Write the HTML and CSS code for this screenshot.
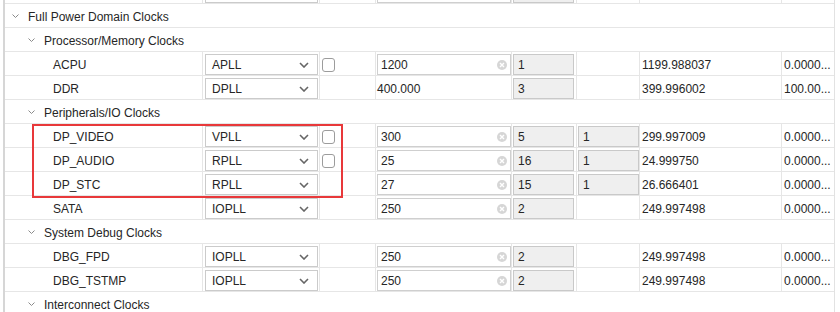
FILE: index.html
```html
<html lang="en">
<head>
    <meta charset="UTF-8">
    <title>Clock Configuration</title>
    <link rel="stylesheet" href="styles.css">
</head>
<body>
    <div class="tree">
        <!-- only the bottom edge of the row above is in view -->
        <div class="row item partial">
            <div class="cell name"></div>
            <div class="cell"><div class="pick"></div></div>
            <div class="cell"></div>
            <div class="cell"><div class="field"></div></div>
            <div class="cell"><div class="fixed"></div></div>
            <div class="cell"></div>
            <div class="cell"></div>
            <div class="cell last"></div>
        </div>

        <div class="row group lvl0">
            <svg class="fold" width="7" height="5" viewBox="0 0 7 5"><polyline points="0.5,0.5 3.5,3.5 6.5,0.5"/></svg>
            <span>Full Power Domain Clocks</span>
        </div>
        <div class="row group lvl1">
            <svg class="fold" width="7" height="5" viewBox="0 0 7 5"><polyline points="0.5,0.5 3.5,3.5 6.5,0.5"/></svg>
            <span>Processor/Memory Clocks</span>
        </div>

        <div class="row item">
            <div class="cell name">ACPU</div>
            <div class="cell"><div class="pick"><span>APLL</span><svg class="arrow" width="10" height="6" viewBox="0 0 10 6"><polyline points="1,1 5,5 9,1"/></svg></div></div>
            <div class="cell"><div class="check"></div></div>
            <div class="cell"><div class="field"><span>1200</span><svg class="clear" width="10" height="10" viewBox="0 0 10 10"><circle cx="5" cy="5" r="5"/><path d="M3 3 L7 7 M7 3 L3 7"/></svg></div></div>
            <div class="cell"><div class="fixed">1</div></div>
            <div class="cell"></div>
            <div class="cell">1199.988037</div>
            <div class="cell last">0.0000...</div>
        </div>
        <div class="row item">
            <div class="cell name">DDR</div>
            <div class="cell"><div class="pick"><span>DPLL</span><svg class="arrow" width="10" height="6" viewBox="0 0 10 6"><polyline points="1,1 5,5 9,1"/></svg></div></div>
            <div class="cell"></div>
            <div class="cell plain">400.000</div>
            <div class="cell"><div class="fixed">3</div></div>
            <div class="cell"></div>
            <div class="cell">399.996002</div>
            <div class="cell last">100.00...</div>
        </div>

        <div class="row group lvl1">
            <svg class="fold" width="7" height="5" viewBox="0 0 7 5"><polyline points="0.5,0.5 3.5,3.5 6.5,0.5"/></svg>
            <span>Peripherals/IO Clocks</span>
        </div>

        <div class="row item">
            <div class="cell name">DP_VIDEO</div>
            <div class="cell"><div class="pick"><span>VPLL</span><svg class="arrow" width="10" height="6" viewBox="0 0 10 6"><polyline points="1,1 5,5 9,1"/></svg></div></div>
            <div class="cell"><div class="check"></div></div>
            <div class="cell"><div class="field"><span>300</span><svg class="clear" width="10" height="10" viewBox="0 0 10 10"><circle cx="5" cy="5" r="5"/><path d="M3 3 L7 7 M7 3 L3 7"/></svg></div></div>
            <div class="cell"><div class="fixed">5</div></div>
            <div class="cell"><div class="fixed">1</div></div>
            <div class="cell">299.997009</div>
            <div class="cell last">0.0000...</div>
        </div>
        <div class="row item">
            <div class="cell name">DP_AUDIO</div>
            <div class="cell"><div class="pick"><span>RPLL</span><svg class="arrow" width="10" height="6" viewBox="0 0 10 6"><polyline points="1,1 5,5 9,1"/></svg></div></div>
            <div class="cell"><div class="check"></div></div>
            <div class="cell"><div class="field"><span>25</span><svg class="clear" width="10" height="10" viewBox="0 0 10 10"><circle cx="5" cy="5" r="5"/><path d="M3 3 L7 7 M7 3 L3 7"/></svg></div></div>
            <div class="cell"><div class="fixed">16</div></div>
            <div class="cell"><div class="fixed">1</div></div>
            <div class="cell">24.999750</div>
            <div class="cell last">0.0000...</div>
        </div>
        <div class="row item">
            <div class="cell name">DP_STC</div>
            <div class="cell"><div class="pick"><span>RPLL</span><svg class="arrow" width="10" height="6" viewBox="0 0 10 6"><polyline points="1,1 5,5 9,1"/></svg></div></div>
            <div class="cell"></div>
            <div class="cell"><div class="field"><span>27</span><svg class="clear" width="10" height="10" viewBox="0 0 10 10"><circle cx="5" cy="5" r="5"/><path d="M3 3 L7 7 M7 3 L3 7"/></svg></div></div>
            <div class="cell"><div class="fixed">15</div></div>
            <div class="cell"><div class="fixed">1</div></div>
            <div class="cell">26.666401</div>
            <div class="cell last">0.0000...</div>
        </div>
        <div class="row item">
            <div class="cell name">SATA</div>
            <div class="cell"><div class="pick"><span>IOPLL</span><svg class="arrow" width="10" height="6" viewBox="0 0 10 6"><polyline points="1,1 5,5 9,1"/></svg></div></div>
            <div class="cell"></div>
            <div class="cell"><div class="field"><span>250</span><svg class="clear" width="10" height="10" viewBox="0 0 10 10"><circle cx="5" cy="5" r="5"/><path d="M3 3 L7 7 M7 3 L3 7"/></svg></div></div>
            <div class="cell"><div class="fixed">2</div></div>
            <div class="cell"></div>
            <div class="cell">249.997498</div>
            <div class="cell last">0.0000...</div>
        </div>

        <div class="row group lvl1">
            <svg class="fold" width="7" height="5" viewBox="0 0 7 5"><polyline points="0.5,0.5 3.5,3.5 6.5,0.5"/></svg>
            <span>System Debug Clocks</span>
        </div>

        <div class="row item">
            <div class="cell name">DBG_FPD</div>
            <div class="cell"><div class="pick"><span>IOPLL</span><svg class="arrow" width="10" height="6" viewBox="0 0 10 6"><polyline points="1,1 5,5 9,1"/></svg></div></div>
            <div class="cell"></div>
            <div class="cell"><div class="field"><span>250</span><svg class="clear" width="10" height="10" viewBox="0 0 10 10"><circle cx="5" cy="5" r="5"/><path d="M3 3 L7 7 M7 3 L3 7"/></svg></div></div>
            <div class="cell"><div class="fixed">2</div></div>
            <div class="cell"></div>
            <div class="cell">249.997498</div>
            <div class="cell last">0.0000...</div>
        </div>
        <div class="row item">
            <div class="cell name">DBG_TSTMP</div>
            <div class="cell"><div class="pick"><span>IOPLL</span><svg class="arrow" width="10" height="6" viewBox="0 0 10 6"><polyline points="1,1 5,5 9,1"/></svg></div></div>
            <div class="cell"></div>
            <div class="cell"><div class="field"><span>250</span><svg class="clear" width="10" height="10" viewBox="0 0 10 10"><circle cx="5" cy="5" r="5"/><path d="M3 3 L7 7 M7 3 L3 7"/></svg></div></div>
            <div class="cell"><div class="fixed">2</div></div>
            <div class="cell"></div>
            <div class="cell">249.997498</div>
            <div class="cell last">0.0000...</div>
        </div>

        <div class="row group lvl1">
            <svg class="fold" width="7" height="5" viewBox="0 0 7 5"><polyline points="0.5,0.5 3.5,3.5 6.5,0.5"/></svg>
            <span>Interconnect Clocks</span>
        </div>

        <!-- red box round the display port clocks -->
        <div class="mark"></div>
    </div>
</body>
</html>
```

FILE: styles.css
```css
*{
    box-sizing: border-box;
    margin: 0;
}
body{
    background: #fff;
    font-family: "Liberation Sans", Arial, sans-serif;
    font-size: 12px;
    color: #262626;
    overflow: hidden;
}
.tree{
    position: relative;
    margin-left: 3px;
    width: 832px;
    border-left: 2px solid #d6d6d6;
    border-right: 1px solid #e2e2e2;
}
.row{
    height: 24px;
    border-bottom: 1px solid #e6e6e6;
}
.partial{
    margin-top: -20px;
}
.item{
    display: grid;
    grid-template-columns: 198px 117px 56px 136px 65px 63px 142px 52px;
}
.cell{
    border-right: 1px solid #e6e6e6;
    display: flex;
    align-items: center;
    white-space: nowrap;
    overflow: hidden;
    padding: 2px 0 0 2px;
}
.cell.last{
    border-right: none;
}
.cell.name{
    padding-left: 48px;
}
.cell.plain{
    padding-left: 1px;
}
.group{
    display: flex;
    align-items: center;
    padding-top: 2px;
}
.group .fold{
    fill: none;
    stroke: #8a8a8a;
    stroke-width: 1;
    margin-right: 9px;
}
.lvl0{
    padding-left: 7px;
}
.lvl1{
    padding-left: 23px;
}
.pick{
    width: 113px;
    height: 21px;
    border: 1px solid #cbcbcb;
    background: #fff;
    display: flex;
    align-items: center;
    justify-content: space-between;
    padding: 0 8px 0 6px;
}
.arrow{
    fill: none;
    stroke: #666;
    stroke-width: 1.6;
}
.check{
    width: 13px;
    height: 14px;
    border: 1px solid #9c9c9c;
    border-radius: 3px;
    background: #fff;
}
.field{
    width: 134px;
    height: 21px;
    margin-left: -1px;
    border: 1px solid #cfcfcf;
    background: #fff;
    display: flex;
    align-items: center;
    justify-content: space-between;
    padding: 0 3px 0 3px;
}
.clear circle{
    fill: #d6d6d6;
}
.clear path{
    stroke: #fff;
    stroke-width: 1.4;
}
.fixed{
    width: 61px;
    height: 21px;
    margin-left: -1px;
    border: 1px solid #c9c9c9;
    background: #efefef;
    display: flex;
    align-items: center;
    padding-left: 4px;
}
.mark{
    position: absolute;
    left: 27px;
    top: 144px;
    width: 311px;
    height: 74px;
    border: 2px solid #e8383a;
}
```
